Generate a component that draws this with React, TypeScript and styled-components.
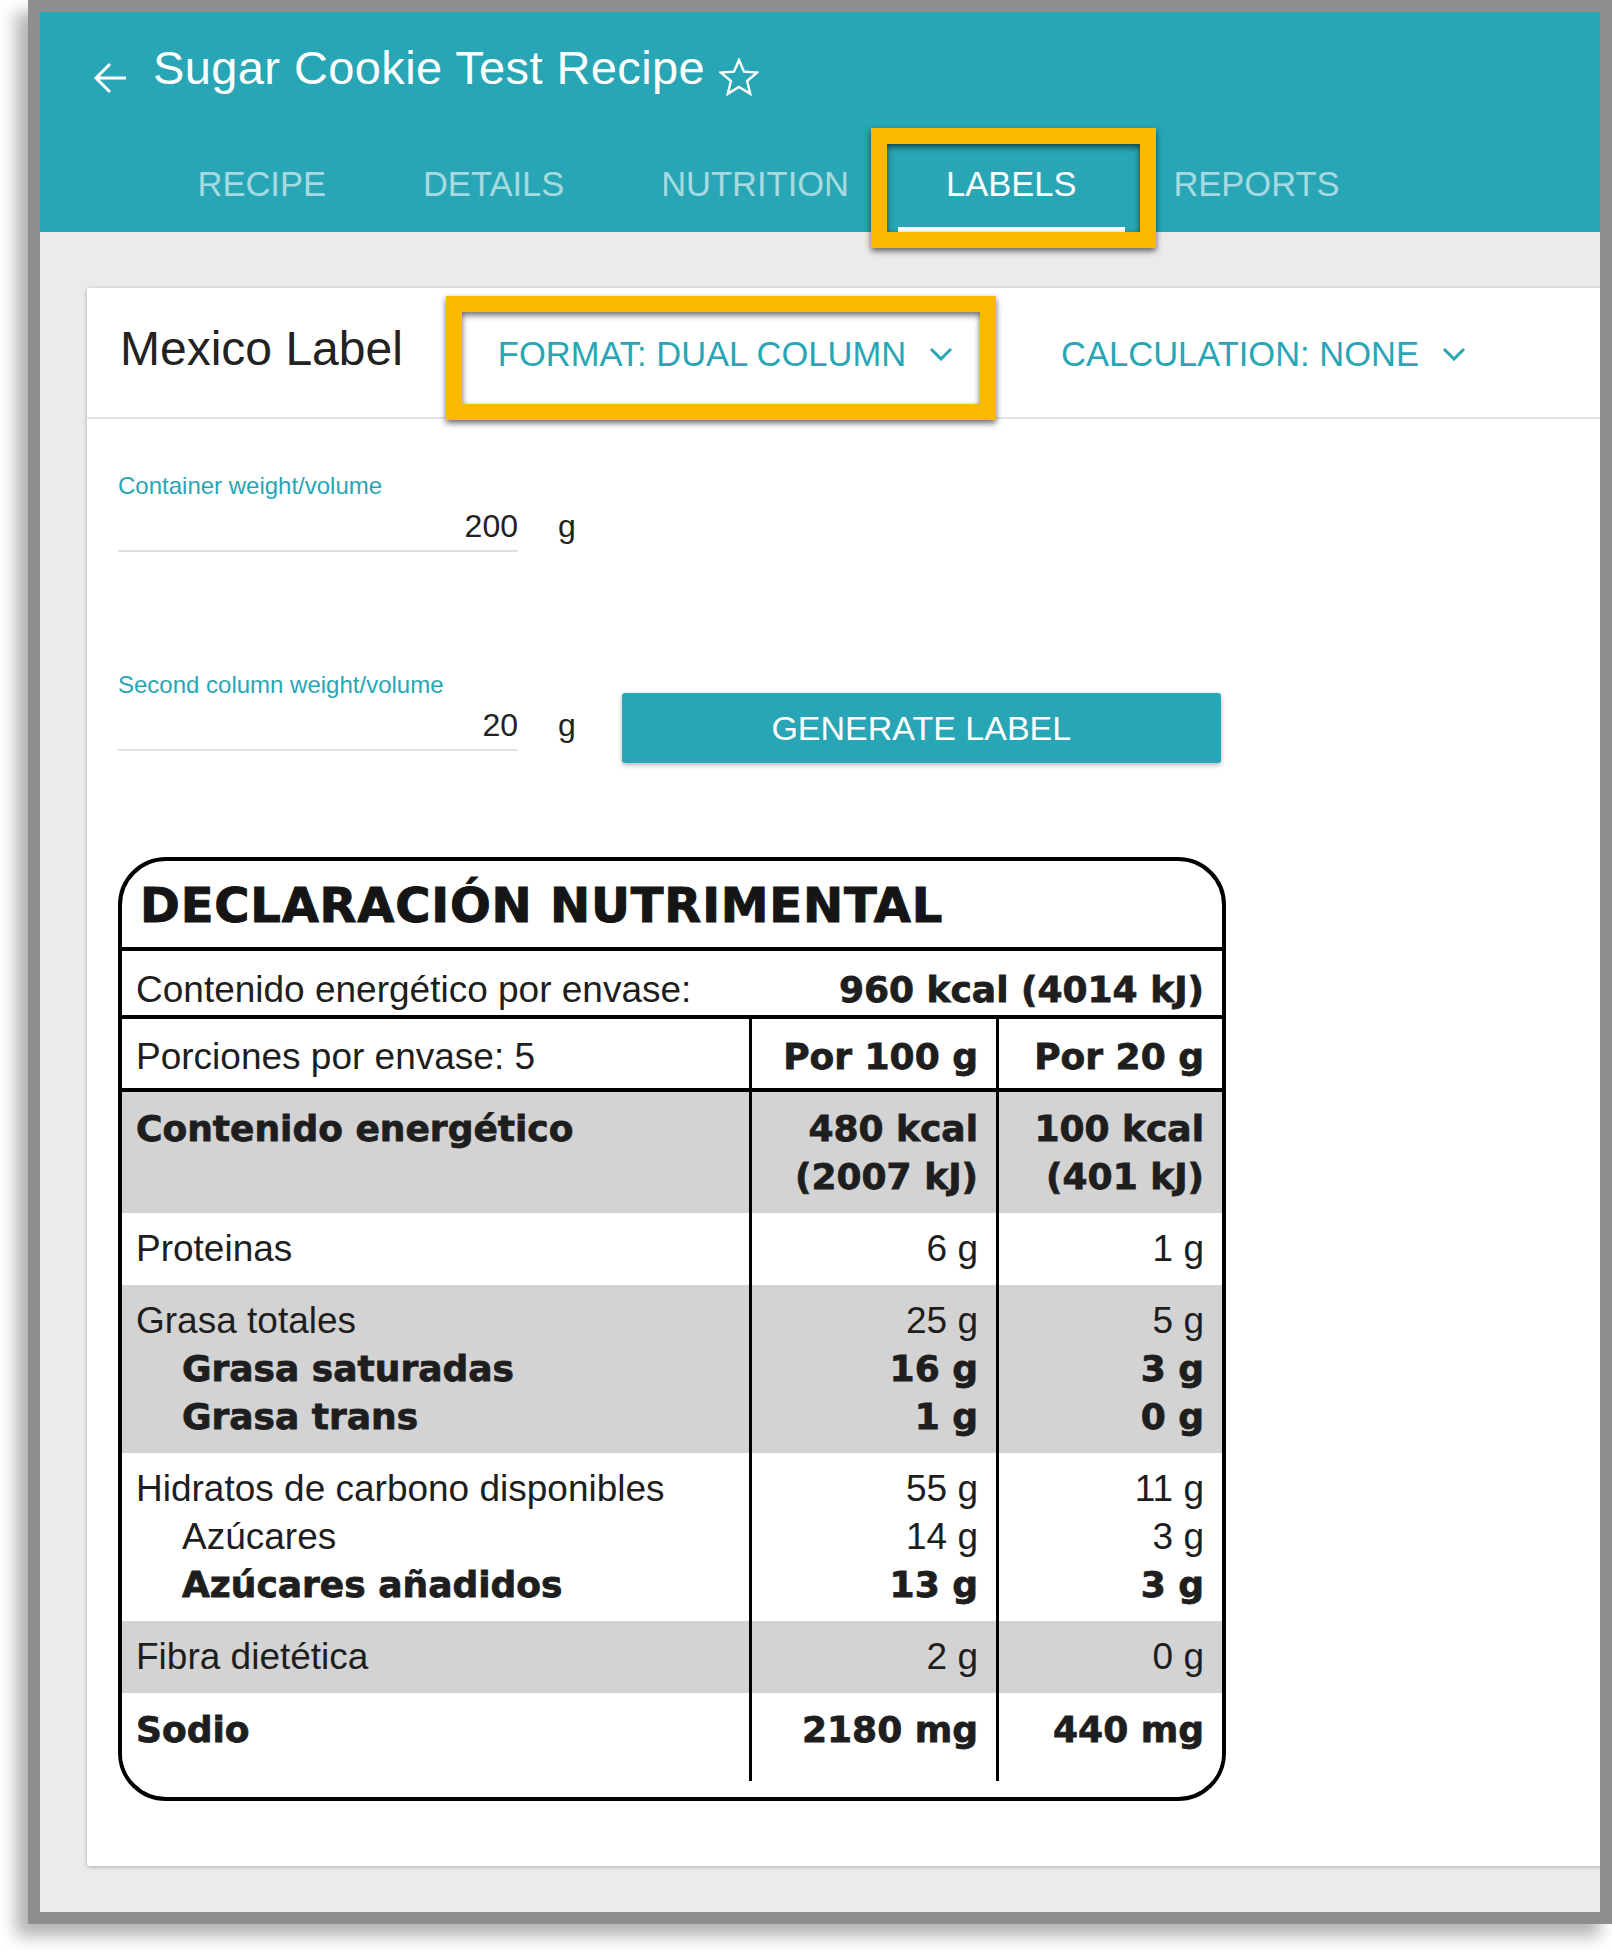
import React from "react";
import styled, { createGlobalStyle } from "styled-components";

const TEAL = "#28a6b5";
const AMBER = "#fbba00";
const INK = "#1e1e1e";

const GlobalStyle = createGlobalStyle`
  html, body {
    margin: 0;
    padding: 0;
    background: #fff;
  }
  body {
    font-family: "Liberation Sans", Arial, sans-serif;
  }
`;

const Page = styled.div`
  width: 1612px;
  height: 1952px;
  padding-left: 28px;
  box-sizing: border-box;
  overflow: hidden;
`;

const Frame = styled.div`
  width: 1584px;
  height: 1924px;
  box-sizing: border-box;
  border: 12px solid #8e8e8e;
  box-shadow: -12px 12px 16px rgba(0, 0, 0, 0.3);
  background: #ebebeb;
  display: flex;
  flex-direction: column;
  overflow: hidden;
`;

/* header */

const Header = styled.header`
  height: 220px;
  flex-shrink: 0;
  box-sizing: border-box;
  padding-top: 28px;
  background: ${TEAL};
  display: flex;
  flex-direction: column;
`;

const TitleRow = styled.div`
  display: flex;
  align-items: flex-start;
  height: 56px;
  padding-left: 53px;
`;

const BackIcon = styled.svg`
  margin-top: 22px;
  flex-shrink: 0;
`;

const StarIcon = styled.svg`
  margin-top: 18px;
  margin-left: 14px;
  flex-shrink: 0;
`;

const RecipeTitle = styled.h1`
  margin: 0 0 0 26px;
  font-size: 47px;
  letter-spacing: 0.4px;
  line-height: 56px;
  font-weight: 400;
  color: #fff;
  white-space: nowrap;
`;

const TabBar = styled.nav`
  margin-top: auto;
  display: flex;
  padding-left: 109px;
`;

const Tab = styled.div<{ $active?: boolean }>`
  position: relative;
  padding: 20px 48.5px 23px;
  font-size: 34.5px;
  line-height: 40px;
  color: ${(p) => (p.$active ? "#fff" : "rgba(255, 255, 255, 0.6)")};
  border-bottom: 5px solid ${(p) => (p.$active ? "#fff" : "transparent")};
  white-space: nowrap;
`;

const Highlight = styled.span<{ $t: number; $r: number; $b: number; $l: number }>`
  position: absolute;
  top: ${(p) => p.$t}px;
  right: ${(p) => p.$r}px;
  bottom: ${(p) => p.$b}px;
  left: ${(p) => p.$l}px;
  border: 16px solid ${AMBER};
  filter: drop-shadow(0 3px 3px rgba(0, 0, 0, 0.6));
  pointer-events: none;
  z-index: 5;
`;

/* content card */

const Content = styled.main`
  flex: 1;
  display: flex;
  flex-direction: column;
  padding: 56px 0 46px 47px;
`;

const Card = styled.section`
  flex: 1;
  margin-right: -20px;
  background: #fff;
  border-radius: 2px;
  box-shadow: 0 1px 4px rgba(0, 0, 0, 0.28);
`;

const CardHeader = styled.div`
  height: 129px;
  display: flex;
  align-items: flex-start;
  padding-left: 33px;
  border-bottom: 2px solid #e3e3e3;
`;

const CardTitle = styled.h2`
  margin: 33px 59px 0 0;
  font-size: 48px;
  line-height: 56px;
  font-weight: 400;
  color: #222;
  white-space: nowrap;
`;

const DropButton = styled.button<{ $gap?: number }>`
  position: relative;
  margin: 25px 0 0 ${(p) => p.$gap ?? 0}px;
  display: flex;
  align-items: center;
  gap: 23px;
  padding: 21px 27px 31px 36px;
  border: none;
  background: none;
  font-family: inherit;
  font-size: 34.5px;
  line-height: 40px;
  color: ${TEAL};
  white-space: nowrap;
`;

const CardBody = styled.div`
  padding: 53px 0 0 31px;
`;

const FieldRow = styled.div<{ $top?: number }>`
  display: flex;
  align-items: flex-start;
  margin-top: ${(p) => p.$top ?? 0}px;
`;

const Field = styled.div`
  display: flex;
  flex-direction: column;
`;

const FieldLabel = styled.label`
  font-size: 24px;
  line-height: 28px;
  color: ${TEAL};
`;

const InputLine = styled.div`
  display: flex;
  align-items: flex-start;
  margin-top: 6px;
`;

const ValueBox = styled.div`
  width: 400px;
  padding-bottom: 4px;
  border-bottom: 2px solid #e0e0e0;
  font-size: 32px;
  line-height: 40px;
  text-align: right;
  color: #222;
`;

const Unit = styled.span`
  margin-left: 40px;
  font-size: 32px;
  line-height: 40px;
  color: #222;
`;

const GenerateButton = styled.button`
  margin: 22px 0 0 46px;
  width: 599px;
  height: 70px;
  border: none;
  border-radius: 3px;
  background: ${TEAL};
  box-shadow: 0 2px 5px rgba(0, 0, 0, 0.3);
  font-family: inherit;
  font-size: 34px;
  color: #fff;
`;

/* nutrition label */

const NutriLabel = styled.div`
  margin-top: 94px;
  width: 1108px;
  box-sizing: border-box;
  border: 4px solid #000;
  border-radius: 48px;
  overflow: hidden;
  padding-bottom: 16px;
  color: ${INK};
  font-size: 37px;
  line-height: 48px;
`;

const NutriTitle = styled.div`
  padding: 16px 18px 14px;
  border-bottom: 4px solid #000;
  font-family: "DejaVu Sans", sans-serif;
  font-weight: 700;
  font-size: 48px;
  letter-spacing: 0.8px;
  line-height: 56px;
  color: #151515;
  -webkit-text-stroke: 1px #151515;
`;

const EnergyRow = styled.div`
  display: flex;
  justify-content: space-between;
  padding: 15px 18px 1px 14px;
  border-bottom: 4px solid #000;
`;

const Group = styled.div<{ $shade?: boolean; $pt: number; $pb: number; $rule?: boolean }>`
  display: grid;
  grid-template-columns: 1fr 247px 226px;
  background: ${(p) => (p.$shade ? "#d3d3d3" : "#fff")};
  border-bottom: ${(p) => (p.$rule ? "4px solid #000" : "none")};

  & > div {
    padding-top: ${(p) => p.$pt}px;
    padding-bottom: ${(p) => p.$pb}px;
  }
`;

const NameCell = styled.div`
  padding-left: 14px;
`;

const ValueCell = styled.div`
  border-left: 3px solid #000;
  padding-right: 18px;
  text-align: right;
`;

const Text = styled.div<{ $bold?: boolean; $indent?: boolean }>`
  height: 48px;
  white-space: nowrap;
  padding-left: ${(p) => (p.$indent ? 46 : 0)}px;
  ${(p) =>
    p.$bold
      ? `font-family: "DejaVu Sans", sans-serif; font-weight: 700; font-size: 36px; -webkit-text-stroke: 0.8px ${INK};`
      : ""}
`;

type Line = { name: string; a: string; b: string; bold?: boolean; indent?: boolean };
type Block = { shade: boolean; pt: number; pb: number; lines: Line[] };

const blocks: Block[] = [
  {
    shade: true,
    pt: 13,
    pb: 12,
    lines: [
      { name: "Contenido energético", a: "480 kcal", b: "100 kcal", bold: true },
      { name: "", a: "(2007 kJ)", b: "(401 kJ)", bold: true },
    ],
  },
  { shade: false, pt: 12, pb: 12, lines: [{ name: "Proteinas", a: "6 g", b: "1 g" }] },
  {
    shade: true,
    pt: 12,
    pb: 12,
    lines: [
      { name: "Grasa totales", a: "25 g", b: "5 g" },
      { name: "Grasa saturadas", a: "16 g", b: "3 g", bold: true, indent: true },
      { name: "Grasa trans", a: "1 g", b: "0 g", bold: true, indent: true },
    ],
  },
  {
    shade: false,
    pt: 12,
    pb: 12,
    lines: [
      { name: "Hidratos de carbono disponibles", a: "55 g", b: "11 g" },
      { name: "Azúcares", a: "14 g", b: "3 g", indent: true },
      { name: "Azúcares añadidos", a: "13 g", b: "3 g", bold: true, indent: true },
    ],
  },
  { shade: true, pt: 12, pb: 12, lines: [{ name: "Fibra dietética", a: "2 g", b: "0 g" }] },
  { shade: false, pt: 13, pb: 27, lines: [{ name: "Sodio", a: "2180 mg", b: "440 mg", bold: true }] },
];

const Chevron = () => (
  <svg width="24" height="14" viewBox="0 0 24 14">
    <polyline points="2,2 12,12 22,2" fill="none" stroke={TEAL} strokeWidth="3" />
  </svg>
);

const tabs = ["Recipe", "Details", "Nutrition", "Labels", "Reports"];

const App: React.FC = () => {
  return (
    <Page>
      <GlobalStyle />
      <Frame>
        <Header>
          <TitleRow>
            <BackIcon width="34" height="32" viewBox="0 0 34 32">
              <path d="M33 16H3M17 2L3 16l14 14" fill="none" stroke="#fff" strokeWidth="3" />
            </BackIcon>
            <RecipeTitle>Sugar Cookie Test Recipe</RecipeTitle>
            <StarIcon width="40" height="38" viewBox="0 0 40 38">
              <polygon
                points="20,2 25,13.6 38,14.6 28.1,23 31.2,35.8 20,29 8.8,35.8 11.9,23 2,14.6 15,13.6"
                fill="none"
                stroke="#fff"
                strokeWidth="2.4"
              />
            </StarIcon>
          </TitleRow>
          <TabBar>
            {tabs.map((t) => (
              <Tab key={t} $active={t === "Labels"}>
                {t.toUpperCase()}
                {t === "Labels" && <Highlight $t={-16} $r={-31} $b={-21} $l={-27} />}
              </Tab>
            ))}
          </TabBar>
        </Header>

        <Content>
          <Card>
            <CardHeader>
              <CardTitle>Mexico Label</CardTitle>
              <DropButton>
                FORMAT: DUAL COLUMN
                <Chevron />
                <Highlight $t={-17} $r={-16} $b={-15} $l={-16} />
              </DropButton>
              <DropButton $gap={45}>
                CALCULATION: NONE
                <Chevron />
              </DropButton>
            </CardHeader>

            <CardBody>
              <FieldRow>
                <Field>
                  <FieldLabel>Container weight/volume</FieldLabel>
                  <InputLine>
                    <ValueBox>200</ValueBox>
                    <Unit>g</Unit>
                  </InputLine>
                </Field>
              </FieldRow>

              <FieldRow $top={119}>
                <Field>
                  <FieldLabel>Second column weight/volume</FieldLabel>
                  <InputLine>
                    <ValueBox>20</ValueBox>
                    <Unit>g</Unit>
                  </InputLine>
                </Field>
                <GenerateButton>GENERATE LABEL</GenerateButton>
              </FieldRow>

              <NutriLabel>
                <NutriTitle>DECLARACIÓN NUTRIMENTAL</NutriTitle>
                <EnergyRow>
                  <Text>Contenido energético por envase:</Text>
                  <Text $bold>960 kcal (4014 kJ)</Text>
                </EnergyRow>
                <Group $pt={14} $pb={7} $rule>
                  <NameCell>
                    <Text>Porciones por envase: 5</Text>
                  </NameCell>
                  <ValueCell>
                    <Text $bold>Por 100 g</Text>
                  </ValueCell>
                  <ValueCell>
                    <Text $bold>Por 20 g</Text>
                  </ValueCell>
                </Group>
                {blocks.map((b, i) => (
                  <Group key={i} $shade={b.shade} $pt={b.pt} $pb={b.pb}>
                    <NameCell>
                      {b.lines.map((l, j) => (
                        <Text key={j} $bold={l.bold} $indent={l.indent}>
                          {l.name}
                        </Text>
                      ))}
                    </NameCell>
                    <ValueCell>
                      {b.lines.map((l, j) => (
                        <Text key={j} $bold={l.bold}>
                          {l.a}
                        </Text>
                      ))}
                    </ValueCell>
                    <ValueCell>
                      {b.lines.map((l, j) => (
                        <Text key={j} $bold={l.bold}>
                          {l.b}
                        </Text>
                      ))}
                    </ValueCell>
                  </Group>
                ))}
              </NutriLabel>
            </CardBody>
          </Card>
        </Content>
      </Frame>
    </Page>
  );
};

export default App;
